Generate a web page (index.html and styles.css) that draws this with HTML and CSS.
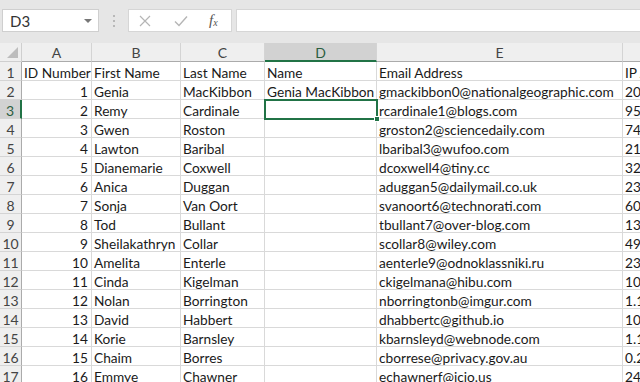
FILE: index.html
```html
<!DOCTYPE html>
<html>
<head>
<meta charset="utf-8">
<link rel="stylesheet" href="styles.css">
</head>
<body>
<div class="app">
  <div class="toolbar">
    <div class="namebox"><span class="ref">D3</span><span class="caret"></span></div>
    <div class="dots"><i></i><i></i><i></i></div>
    <div class="fxbtns">
      <svg class="ic" width="14" height="14" viewBox="0 0 14 14"><path d="M2 2 L12 12 M12 2 L2 12" stroke="#b5b5b5" stroke-width="1.2" fill="none"/></svg>
      <svg class="ic" width="16" height="14" viewBox="0 0 16 14"><path d="M2 7.5 L6 11.5 L14 2.5" stroke="#b5b5b5" stroke-width="1.4" fill="none"/></svg>
      <span class="fx">f<sub>x</sub></span>
    </div>
    <div class="formula"></div>
  </div>
  <div class="sheet">
    <div class="corner"><span class="tri"></span></div>
    <div class="ch">A</div><div class="ch">B</div><div class="ch">C</div><div class="ch sel">D</div><div class="ch">E</div><div class="ch">F</div>

    <div class="rh">1</div><div class="c">ID Number</div><div class="c">First Name</div><div class="c">Last Name</div><div class="c">Name</div><div class="c">Email Address</div><div class="c">IP Address</div>
    <div class="rh">2</div><div class="c n">1</div><div class="c">Genia</div><div class="c">MacKibbon</div><div class="c">Genia MacKibbon</div><div class="c">gmackibbon0@nationalgeographic.com</div><div class="c">206.21.24.18</div>
    <div class="rh sel">3</div><div class="c n">2</div><div class="c">Remy</div><div class="c">Cardinale</div><div class="c active"><span class="handle"></span></div><div class="c">rcardinale1@blogs.com</div><div class="c">95.20.13.46</div>
    <div class="rh">4</div><div class="c n">3</div><div class="c">Gwen</div><div class="c">Roston</div><div class="c"></div><div class="c">groston2@sciencedaily.com</div><div class="c">74.210.1.12</div>
    <div class="rh">5</div><div class="c n">4</div><div class="c">Lawton</div><div class="c">Baribal</div><div class="c"></div><div class="c">lbaribal3@wufoo.com</div><div class="c">217.9.4.200</div>
    <div class="rh">6</div><div class="c n">5</div><div class="c">Dianemarie</div><div class="c">Coxwell</div><div class="c"></div><div class="c">dcoxwell4@tiny.cc</div><div class="c">32.10.7.98</div>
    <div class="rh">7</div><div class="c n">6</div><div class="c">Anica</div><div class="c">Duggan</div><div class="c"></div><div class="c">aduggan5@dailymail.co.uk</div><div class="c">231.7.5.1</div>
    <div class="rh">8</div><div class="c n">7</div><div class="c">Sonja</div><div class="c">Van Oort</div><div class="c"></div><div class="c">svanoort6@technorati.com</div><div class="c">60.14.8.3</div>
    <div class="rh">9</div><div class="c n">8</div><div class="c">Tod</div><div class="c">Bullant</div><div class="c"></div><div class="c">tbullant7@over-blog.com</div><div class="c">139.5.2.77</div>
    <div class="rh">10</div><div class="c n">9</div><div class="c">Sheilakathryn</div><div class="c">Collar</div><div class="c"></div><div class="c">scollar8@wiley.com</div><div class="c">49.3.66.8</div>
    <div class="rh">11</div><div class="c n">10</div><div class="c">Amelita</div><div class="c">Enterle</div><div class="c"></div><div class="c">aenterle9@odnoklassniki.ru</div><div class="c">238.6.1.4</div>
    <div class="rh">12</div><div class="c n">11</div><div class="c">Cinda</div><div class="c">Kigelman</div><div class="c"></div><div class="c">ckigelmana@hibu.com</div><div class="c">109.4.2.5</div>
    <div class="rh">13</div><div class="c n">12</div><div class="c">Nolan</div><div class="c">Borrington</div><div class="c"></div><div class="c">nborringtonb@imgur.com</div><div class="c">1.19.3.2</div>
    <div class="rh">14</div><div class="c n">13</div><div class="c">David</div><div class="c">Habbert</div><div class="c"></div><div class="c">dhabbertc@github.io</div><div class="c">105.9.7.1</div>
    <div class="rh">15</div><div class="c n">14</div><div class="c">Korie</div><div class="c">Barnsley</div><div class="c"></div><div class="c">kbarnsleyd@webnode.com</div><div class="c">1.12.6.4</div>
    <div class="rh">16</div><div class="c n">15</div><div class="c">Chaim</div><div class="c">Borres</div><div class="c"></div><div class="c">cborrese@privacy.gov.au</div><div class="c">0.21.5.9</div>
    <div class="rh">17</div><div class="c n">16</div><div class="c">Emmye</div><div class="c">Chawner</div><div class="c"></div><div class="c">echawnerf@icio.us</div><div class="c">248.3.1.6</div>
  </div>
</div>
</body>
</html>
```

FILE: styles.css
```css
* { box-sizing: border-box; }
html, body { margin: 0; padding: 0; }
body {
  width: 640px;
  height: 382px;
  overflow: hidden;
  background: #fff;
  font-family: Lato, "Liberation Sans", sans-serif;
  color: #1a1a1a;
}
.app { width: 640px; }
.toolbar {
  height: 43px;
  background: #e6e6e6;
  display: flex;
  align-items: flex-start;
  padding: 9px 0 0 2px;
}
.namebox {
  width: 97px;
  height: 23px;
  background: #fff;
  border: 1px solid #cfcfcf;
  display: flex;
  align-items: center;
  justify-content: space-between;
  padding: 0 6px 0 7px;
}
.ref { font-size: 15px; color: #333; }
.caret {
  width: 0; height: 0;
  border-left: 4px solid transparent;
  border-right: 4px solid transparent;
  border-top: 4px solid #777;
}
.dots {
  width: 29px;
  height: 23px;
  display: flex;
  flex-direction: column;
  align-items: center;
  justify-content: center;
  gap: 3px;
}
.dots i { display: block; width: 2px; height: 2px; background: #b8b8b8; }
.fxbtns {
  width: 104px;
  height: 23px;
  background: #fff;
  border: 1px solid #d6d6d6;
  display: flex;
  align-items: center;
  gap: 21px;
  padding: 0 0 0 9px;
}
.fx {
  font-family: "Liberation Serif", serif;
  font-style: italic;
  font-size: 15px;
  color: #555;
  margin-left: -1px;
}
.fx sub { font-size: 10px; vertical-align: -1px; }
.formula {
  flex: 1;
  height: 23px;
  margin-left: 4px;
  background: #fff;
  border: 1px solid #d6d6d6;
  border-right: none;
}
.sheet {
  display: grid;
  grid-template-columns: 22px 70px 89px 84px 112px 246px 120px;
  grid-auto-rows: 19px;
  font-size: 13.7px;
}
.corner {
  background: #efefef;
  border-right: 1px solid #cfcfcf;
  border-bottom: 1px solid #cfcfcf;
  position: relative;
}
.tri {
  position: absolute;
  right: 3px; bottom: 3px;
  width: 0; height: 0;
  border-left: 11px solid transparent;
  border-bottom: 11px solid #bdbdbd;
}
.ch {
  background: #efefef;
  border-right: 1px solid #d4d4d4;
  border-bottom: 1px solid #ababab;
  text-align: center;
  padding-top: 1px;
  line-height: 18px;
  color: #444;
  font-size: 14px;
}
.ch.sel {
  background: #d2d2d2;
  border-bottom: 2px solid #217346;
  color: #2c5e3f;
}
.rh {
  background: #efefef;
  border-right: 1px solid #ababab;
  border-bottom: 1px solid #d4d4d4;
  text-align: center;
  padding-top: 2px;
  line-height: 17px;
  color: #444;
  font-size: 14px;
}
.rh.sel {
  background: #d2d2d2;
  border-right: 2px solid #217346;
  color: #2c5e3f;
}
.c {
  border-right: 1px solid #d9d9d9;
  border-bottom: 1px solid #d9d9d9;
  padding: 2px 2px 0;
  line-height: 17px;
  white-space: nowrap;
  position: relative;
}
.c.n { text-align: right; padding-right: 3px; }
.c.active {
  outline: 2px solid #217346;
  outline-offset: -1px;
  z-index: 1;
}
.handle {
  position: absolute;
  right: -4px; bottom: -4px;
  width: 6px; height: 6px;
  background: #217346;
  border: 1px solid #fff;
}
```
